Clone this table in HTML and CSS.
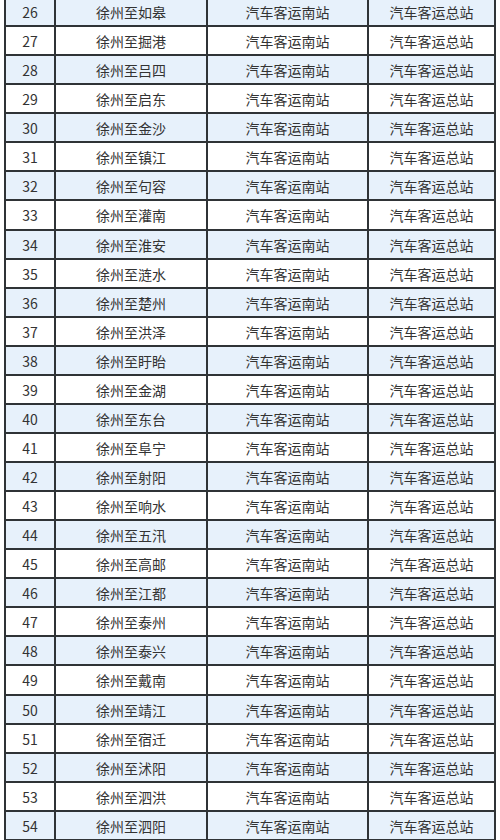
FILE: index.html
```html
<!DOCTYPE html>
<html lang="zh">
<head>
<meta charset="utf-8">
<link rel="stylesheet" href="styles.css">
</head>
<body>
<div class="table" id="t"></div>
<script src="app.js"></script>
</body>
</html>
```
FILE: app.js
```js
const names = ["如皋","掘港","吕四","启东","金沙","镇江","句容","灌南","淮安","涟水","楚州","洪泽","盱眙","金湖","东台","阜宁","射阳","响水","五汛","高邮","江都","泰州","泰兴","戴南","靖江","宿迁","沭阳","泗洪","泗阳"];
const t = document.getElementById('t');
names.forEach((n, i) => {
  const num = 26 + i;
  const row = document.createElement('div');
  row.className = 'row' + (i % 2 === 0 ? ' alt' : '');
  row.innerHTML = `<div class="cell">${num}</div><div class="cell">徐州至${n}</div><div class="cell">汽车客运南站</div><div class="cell">汽车客运总站</div>`;
  t.appendChild(row);
});
```
FILE: styles.css
```css
html, body { margin: 0; padding: 0; background: #fff; }
body { overflow: hidden; height: 840px; }
.table {
  margin: -4px 0 0 4px;
  width: 492px;
  box-sizing: border-box;
  border-left: 2px solid #2f3336;
  border-top: 2px solid #2f3336;
  font-family: "Noto Sans CJK SC", "Noto Sans", sans-serif;
  font-size: 14px;
  color: #333;
}
.row {
  display: grid;
  grid-template-columns: 50px 152px 161px 127px;
  height: 29.07px;
  box-sizing: border-box;
  background: #fff;
}
.row.alt { background: #e7f1fb; }
.cell {
  border-right: 2px solid #2f3336;
  border-bottom: 2px solid #2f3336;
  display: flex;
  align-items: center;
  justify-content: center;
  line-height: 1;
  padding-top: 1px;
}
```
